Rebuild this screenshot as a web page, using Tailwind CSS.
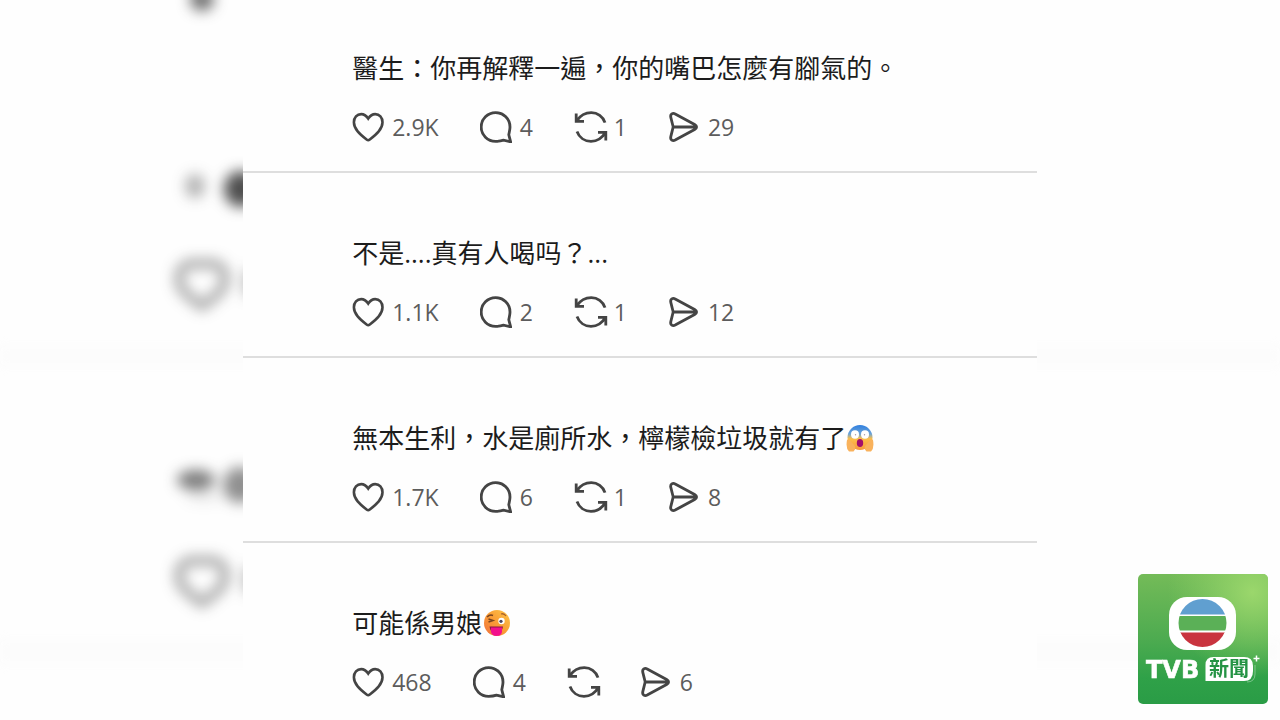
<!DOCTYPE html>
<html lang="zh-Hant">

<head>
  <meta charset="UTF-8">
  <meta name="viewport" content="width=device-width, initial-scale=1.0">
  <title>TVB 新聞</title>
  <script src="https://cdn.jsdelivr.net/npm/@tailwindcss/browser@4"></script>
</head>

<body class="relative h-screen overflow-hidden bg-[#fefefe] font-['Open_Sans','Noto_Sans_CJK_TC',sans-serif]">
  <!-- Icons -->
  <svg class="hidden">
    <symbol id="heart" viewBox="0 0 32 32">
      <path d="M16.2 7.6C14.2 4.6 11.8 3.1 9.2 3.1 5 3.1 1.9 6.4 1.9 11.2c0 6.8 5.8 11.8 12.7 17.3q1.6 1.2 3.2 0C24.7 23 30.5 18 30.5 11.2c0-4.8-3.1-8.1-7.3-8.1-2.6 0-5 1.5-7 4.5z" />
    </symbol>
    <symbol id="comment" viewBox="0 0 32 32">
      <path d="M15.6 30.4A14.400 14.400 0 1 1 30 16c0 3-.8 5.200-1.200 7.800L30.600 30.800l-7-1.600c-2.400.8-5 1.200-8 1.200z" />
    </symbol>
    <symbol id="repost" viewBox="0 0 32 32" overflow="visible">
      <path d="M31 11.600C29 5.600 23.500 1.700 17.300 1.700 11 1.700 6 5 2.800 9.800M2.200 2.400v7.900H10M3 20.400c2.200 6 7.700 9.900 14 9.900 6.300 0 11.300-3.300 14.200-8.600M31.800 29.600v-8.200h-7.800" />
    </symbol>
    <symbol id="send" viewBox="0 0 32 32">
      <path d="M5.200 16 2.800 6.400C2 3 4.800 1.700 7.200 2.900l19.400 10.600q4 2.500 0 5L7.200 29.100C4.800 30.300 2 29 2.800 25.600L5.200 16H28" />
    </symbol>
  </svg>

  <!-- Blurred backdrop -->
  <svg class="absolute left-0 top-0 h-[720px] w-[243px]" viewBox="0 0 243 720" aria-hidden="true">
    <g class="blur-[7px]" fill="#222">
      <circle cx="202" cy="-1" r="12" opacity=".65" />
      <ellipse cx="195" cy="186" rx="10" ry="12" opacity=".35" />
      <ellipse cx="241" cy="189" rx="17" ry="18" opacity=".8" />
      <ellipse cx="196" cy="480" rx="19" ry="10" opacity=".6" />
      <ellipse cx="240" cy="485" rx="17" ry="18" opacity=".5" />
      <ellipse cx="204" cy="497" rx="18" ry="5" opacity=".1" />
      <g fill="none" stroke="#222" stroke-width="9" opacity=".42">
        <path d="M202 265c-9-4-23-1-23 14 0 12 11 18 23 27 12-9 23-15 23-27 0-15-14-18-23-14z" />
        <path d="M202 562c-9-4-23-1-23 14 0 12 11 18 23 27 12-9 23-15 23-27 0-15-14-18-23-14z" />
        <path d="M249 270v26M249 567v26" />
      </g>
    </g>
  </svg>
  <div class="absolute inset-x-0 top-[346px] h-5 bg-[#fcfcfc] blur-xs"></div>
  <div class="absolute inset-x-0 top-[640px] h-6 bg-[#fcfcfc] blur-xs"></div>

  <!-- Comments -->
  <main class="relative mx-auto -mt-3 w-[62%] bg-[#fefefe] text-[23px] text-[#5c5c5c]">
    <article class="border-b-2 border-[#dedede] pt-[62px] pb-[27px] pl-[109px]">
      <p class="flex h-9 items-center text-[26px] whitespace-nowrap text-[#1c1c1c]">醫生：你再解釋一遍，你的嘴巴怎麼有腳氣的。</p>
      <div class="mt-6 flex h-[34px] gap-[41px]">
        <button class="flex items-center gap-2"><svg class="size-8 fill-none stroke-[#444] stroke-[2.6]"><use href="#heart" /></svg>2.9K</button>
        <button class="flex items-center gap-2"><svg class="size-8 fill-none stroke-[#444] stroke-[2.8]"><use href="#comment" /></svg>4</button>
        <button class="flex items-center gap-2"><svg class="size-8 overflow-visible fill-none stroke-[#444] stroke-[2.8]"><use href="#repost" /></svg>1</button>
        <button class="flex items-center gap-2"><svg class="size-8 fill-none stroke-[#444] stroke-[2.8]"><use href="#send" /></svg>29</button>
      </div>
    </article>

    <article class="border-b-2 border-[#dedede] pt-[62px] pb-[27px] pl-[109px]">
      <p class="flex h-9 items-center text-[26px] whitespace-nowrap text-[#1c1c1c]">不是....真有人喝吗？...</p>
      <div class="mt-6 flex h-[34px] gap-[41px]">
        <button class="flex items-center gap-2"><svg class="size-8 fill-none stroke-[#444] stroke-[2.6]"><use href="#heart" /></svg>1.1K</button>
        <button class="flex items-center gap-2"><svg class="size-8 fill-none stroke-[#444] stroke-[2.8]"><use href="#comment" /></svg>2</button>
        <button class="flex items-center gap-2"><svg class="size-8 overflow-visible fill-none stroke-[#444] stroke-[2.8]"><use href="#repost" /></svg>1</button>
        <button class="flex items-center gap-2"><svg class="size-8 fill-none stroke-[#444] stroke-[2.8]"><use href="#send" /></svg>12</button>
      </div>
    </article>

    <article class="border-b-2 border-[#dedede] pt-[62px] pb-[27px] pl-[109px]">
      <p class="flex h-9 items-center text-[26px] whitespace-nowrap text-[#1c1c1c]">無本生利，水是廁所水，檸檬檢垃圾就有了<svg class="size-7" viewBox="0 0 28 28" role="img" aria-label="😱">
          <defs>
            <linearGradient id="scream" x1="0" y1="0" x2="0" y2="1">
              <stop offset="0" stop-color="#2f7fe0" />
              <stop offset=".35" stop-color="#6aa3d8" />
              <stop offset=".55" stop-color="#fcbf4a" />
              <stop offset="1" stop-color="#f79a3c" />
            </linearGradient>
          </defs>
          <circle cx="14" cy="13.5" r="12.5" fill="url(#scream)" />
          <ellipse cx="9" cy="10.5" rx="4" ry="4.2" fill="#fff" />
          <ellipse cx="19" cy="10.5" rx="4" ry="4.2" fill="#fff" />
          <circle cx="9.5" cy="10.8" r=".7" fill="#a59aa5" />
          <circle cx="18.5" cy="10.8" r=".7" fill="#a59aa5" />
          <ellipse cx="14" cy="19" rx="3.2" ry="4" fill="#a30f6b" />
          <path d="M1 16q2-2 3.500 1l4 4.500q2 3-1 6H3Q-.5 24 1 16zM27 16q-2-2-3.500 1l-4 4.500q-2 3 1 6H25q3.500-3.500 2-11.500z" fill="#f9b25c" />
        </svg></p>
      <div class="mt-6 flex h-[34px] gap-[41px]">
        <button class="flex items-center gap-2"><svg class="size-8 fill-none stroke-[#444] stroke-[2.6]"><use href="#heart" /></svg>1.7K</button>
        <button class="flex items-center gap-2"><svg class="size-8 fill-none stroke-[#444] stroke-[2.8]"><use href="#comment" /></svg>6</button>
        <button class="flex items-center gap-2"><svg class="size-8 overflow-visible fill-none stroke-[#444] stroke-[2.8]"><use href="#repost" /></svg>1</button>
        <button class="flex items-center gap-2"><svg class="size-8 fill-none stroke-[#444] stroke-[2.8]"><use href="#send" /></svg>8</button>
      </div>
    </article>

    <article class="pt-[62px] pb-[27px] pl-[109px]">
      <p class="flex h-9 items-center text-[26px] whitespace-nowrap text-[#1c1c1c]">可能係男娘<svg class="size-7" viewBox="0 0 28 28" role="img" aria-label="😜">
          <defs>
            <linearGradient id="wink" x1="0" y1="1" x2="1" y2="0">
              <stop offset="0" stop-color="#ee7040" />
              <stop offset=".5" stop-color="#fa9d35" />
              <stop offset="1" stop-color="#fdc84a" />
            </linearGradient>
          </defs>
          <circle cx="15" cy="14" r="13" fill="url(#wink)" />
          <path d="M6.500 10l4.500 1.500-4.500 1.500M5 8q3-3 6-1.500" fill="none" stroke="#7a4520" stroke-width="1.500" />
          <path d="M19 5q3-1 5 2" fill="none" stroke="#a8602a" stroke-width="1.300" />
          <circle cx="19.500" cy="12" r="3.200" fill="#fff" />
          <circle cx="19" cy="12.300" r="1.600" fill="#4a4560" />
          <path d="M7.500 17.500h13.500q-1 7-6.700 7-5.800 0-6.800-7z" fill="#8d1546" />
          <path d="M9 18.500h11v4.500q-1 4-5.500 4T9 23z" fill="#f2108c" />
        </svg></p>
      <div class="mt-6 flex h-[34px] gap-[41px]">
        <button class="flex items-center gap-2"><svg class="size-8 fill-none stroke-[#444] stroke-[2.6]"><use href="#heart" /></svg>468</button>
        <button class="flex items-center gap-2"><svg class="size-8 fill-none stroke-[#444] stroke-[2.8]"><use href="#comment" /></svg>4</button>
        <button class="flex items-center" aria-label="轉發"><svg class="size-8 overflow-visible fill-none stroke-[#444] stroke-[2.8]"><use href="#repost" /></svg></button>
        <button class="flex items-center gap-2"><svg class="size-8 fill-none stroke-[#444] stroke-[2.8]"><use href="#send" /></svg>6</button>
      </div>
    </article>
  </main>

  <!-- Channel logo -->
  <svg class="absolute right-3 bottom-4 size-[130px]" viewBox="0 0 130 130">
    <defs>
      <linearGradient id="green" x1="0" y1="0" x2="0" y2="1">
        <stop offset="0" stop-color="#74bb58" />
        <stop offset=".5" stop-color="#4dab50" />
        <stop offset=".8" stop-color="#2fa148" />
        <stop offset="1" stop-color="#2a9c46" />
      </linearGradient>
      <radialGradient id="glow" cx=".88" cy=".14" r=".65">
        <stop offset="0" stop-color="#9bd76c" />
        <stop offset="1" stop-color="#8fd066" stop-opacity="0" />
      </radialGradient>
      <clipPath id="disc">
        <circle cx="64.500" cy="49" r="24" />
      </clipPath>
    </defs>
    <rect width="130" height="130" rx="5" fill="url(#green)" />
    <rect width="130" height="130" rx="5" fill="url(#glow)" />
    <rect x="31" y="23" width="67" height="53" rx="18" fill="#fff" />
    <g clip-path="url(#disc)">
      <path fill="#609fd0" d="M40 24h50v16.500H40z" />
      <path fill="#5bb057" d="M40 42h50v14.500H40z" />
      <path fill="#c9343f" d="M40 58.500h50V75H40z" />
    </g>
    <text x="8" y="104" fill="#fff" stroke="#fff" stroke-width=".6" class="font-['DejaVu_Sans',sans-serif] text-[24px] font-bold">TVB</text>
    <path d="M67.500 107V91q0-8 8-8H106q9 0 9 9v5q0 10-9 10z" fill="#fff" />
    <path d="M117 91v9q0 8-8 8" fill="none" stroke="#fff" stroke-width=".6" opacity=".6" />
    <text x="71" y="102" fill="#249344" class="font-['Noto_Sans_CJK_TC',sans-serif] text-[20px] font-bold">新聞</text>
    <path d="M118.500 81.500v6M115.500 84.500h6" stroke="#fff" stroke-width="1.500" />
  </svg>
</body>

</html>
